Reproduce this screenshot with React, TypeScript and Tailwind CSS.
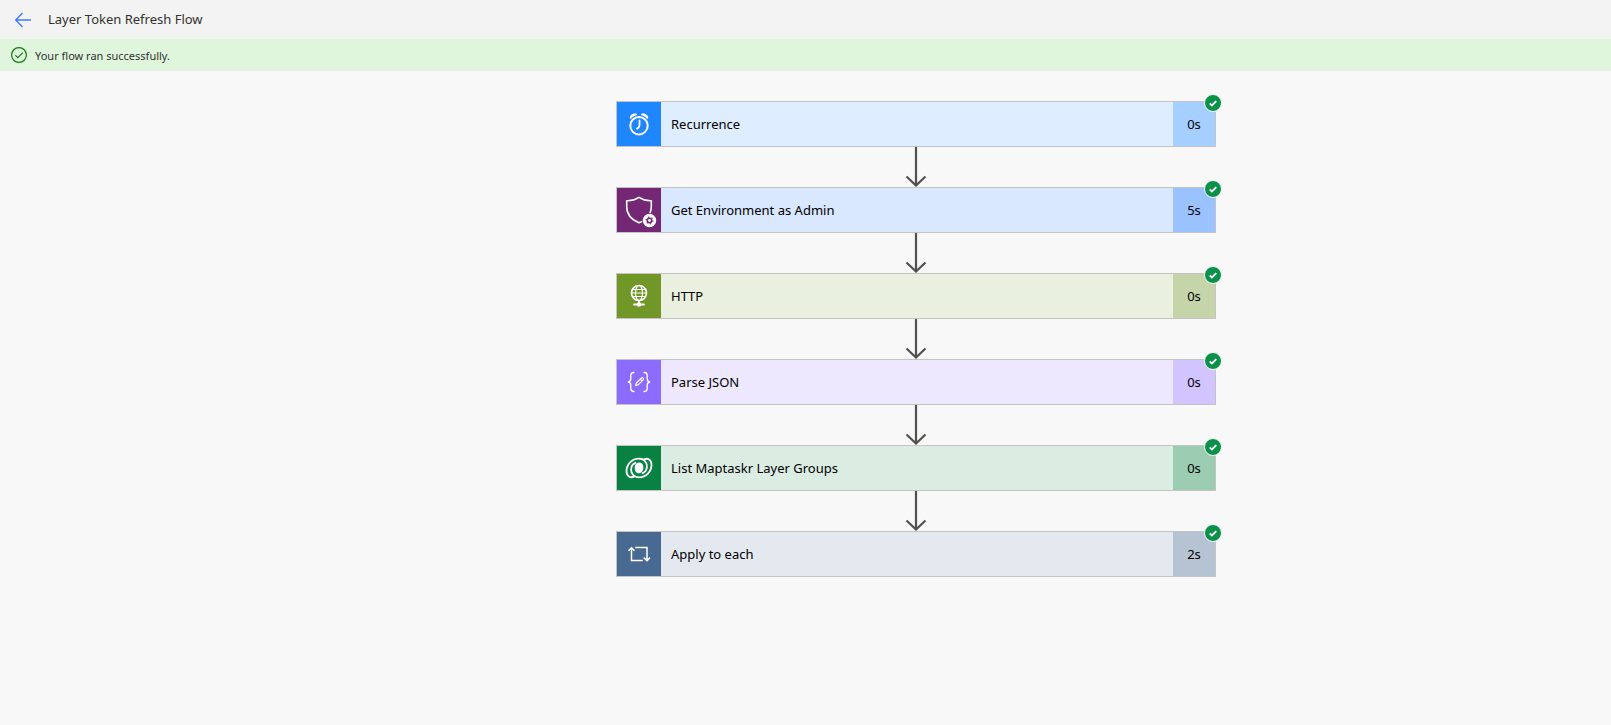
import React from "react";

type Step = {
  name: string;
  duration: string;
  body: string;
  tile: string;
  time: string;
  icon: React.ReactNode;
};

const svgProps = {
  width: 44,
  height: 44,
  viewBox: "0 0 44 44",
  fill: "none",
  stroke: "#fff",
  strokeLinecap: "round" as const,
  strokeLinejoin: "round" as const,
  "aria-hidden": true,
};

const ClockIcon = () => (
  <svg {...svgProps}>
    <circle cx="22" cy="23.700" r="8.7" strokeWidth="2" />
    <path d="M22.5 18.500v4.700c0 1.500-.8 2.600-2.500 3.400" strokeWidth="1.800" />
    <path d="M12.900 16.200c-.8-2.800 3-5.600 6.600-4.500.8.400.7 1.200-.1 1.500-2.200.6-3.700 1.500-5.100 3.200-.5.500-1.200.400-1.400-.2z" fill="#fff" stroke="none" />
    <path d="M31.100 16.200c.8-2.800-3-5.600-6.600-4.500-.8.400-.7 1.200.1 1.500 2.200.6 3.700 1.500 5.100 3.200.5.500 1.200.4 1.400-.2z" fill="#fff" stroke="none" />
  </svg>
);

const ShieldIcon = () => (
  <svg {...svgProps}>
    <path
      d="M27 32.300c-1.500 1-3.200 1.800-5 2.400C14 31.500 9.700 25.500 9.700 18.500v-5.800c4.600.2 8.500-.9 12.300-3.400 3.800 2.500 7.700 3.600 12.300 3.400v5.800c0 2.200-.4 4.300-1.200 6.200"
      strokeWidth="1.600"
    />
    <circle cx="32.500" cy="32.500" r="7.500" fill="#742774" stroke="none" />
    <circle cx="32.500" cy="32.500" r="6.700" fill="#fff" stroke="none" />
    <circle cx="32.500" cy="32.500" r="2.200" stroke="#742774" strokeWidth="1.600" />
    <circle cx="32.500" cy="32.500" r="3.400" stroke="#742774" strokeWidth="1.200" strokeDasharray="1.200 2.360" strokeLinecap="butt" />
  </svg>
);

const GlobeIcon = () => (
  <svg {...svgProps}>
    <circle cx="22" cy="19" r="7.500" strokeWidth="1.700" />
    <ellipse cx="22" cy="19" rx="3.500" ry="7.500" strokeWidth="1.100" />
    <path d="M14.500 19h15M15.800 15.500h12.400M15.800 22.500h12.400" strokeWidth="1" />
    <path d="M22 27v3" strokeWidth="2" />
    <path d="M17 30.500h10" strokeWidth="1.800" />
    <circle cx="22" cy="30.500" r="2.200" fill="#fff" stroke="none" />
  </svg>
);

const JsonIcon = () => (
  <svg {...svgProps}>
    <path
      d="M17 12.500c-2.500 0-3.200.8-3.200 2.700v3.600c0 1.900-.7 2.900-2.500 3.200 1.800.3 2.500 1.300 2.500 3.200v3.600c0 1.900.7 2.700 3.200 2.700M27 12.500c2.500 0 3.200.8 3.200 2.700v3.600c0 1.900.7 2.900 2.500 3.200-1.800.3-2.500 1.300-2.500 3.200v3.600c0 1.900-.7 2.700-3.200 2.700"
      strokeWidth="1.300"
    />
    <path d="M18.600 25.600l.8-2.600 4.900-4.900c.5-.5 1.300-.5 1.800 0s.5 1.300 0 1.800l-4.900 4.900zM23.200 19.200l1.800 1.800" strokeWidth="1.100" />
  </svg>
);

const DataverseIcon = () => (
  <svg {...svgProps}>
    <path
      d="M17.300 30.400c-3.800 2.200-7.800-.4-7.800-5.100C9.500 18.200 15 12.600 22 12.600c4.600 0 7.900 3.300 7.900 7.600 0 3.300-1.600 5.900-4.300 7"
      strokeWidth="1.800"
    />
    <path
      d="M26.700 13.600c3.800-2.200 7.800.4 7.800 5.100 0 7.100-5.500 12.700-12.500 12.700-4.600 0-7.900-3.300-7.900-7.600 0-3.300 1.600-5.900 4.300-7"
      strokeWidth="1.800"
    />
    <path d="M17.700 21.700c0-3 2-5.200 5-5.100 2.300.1 3.700 2.100 3.700 4.700 0 3.400-1.900 6-4.600 6s-4.100-2.600-4.100-5.600z" fill="#fff" stroke="none" />
  </svg>
);

const LoopIcon = () => (
  <svg {...svgProps} strokeLinecap="butt" strokeLinejoin="miter">
    <path d="M25.700 28.400H14.500V16M11.500 18.700l3-3 3 3" strokeWidth="1.500" />
    <path d="M18.300 15.600H30V28.300M26.700 25.600l3.300 3 3-3" strokeWidth="1.500" />
  </svg>
);

const steps: Step[] = [
  { name: "Recurrence", duration: "0s", body: "bg-[#deedff]", tile: "bg-[#1e86ff]", time: "bg-[#a5cfff]", icon: <ClockIcon /> },
  { name: "Get Environment as Admin", duration: "5s", body: "bg-[#d9e7ff]", tile: "bg-[#742774]", time: "bg-[#99c2ff]", icon: <ShieldIcon /> },
  { name: "HTTP", duration: "0s", body: "bg-[#e9f0df]", tile: "bg-[#709727]", time: "bg-[#c6d5a9]", icon: <GlobeIcon /> },
  { name: "Parse JSON", duration: "0s", body: "bg-[#eee8ff]", tile: "bg-[#8c6cff]", time: "bg-[#d1c4ff]", icon: <JsonIcon /> },
  { name: "List Maptaskr Layer Groups", duration: "0s", body: "bg-[#dbece3]", tile: "bg-[#088142]", time: "bg-[#9ccdb3]", icon: <DataverseIcon /> },
  { name: "Apply to each", duration: "2s", body: "bg-[#e4e9f0]", tile: "bg-[#486991]", time: "bg-[#b6c3d3]", icon: <LoopIcon /> },
];

const Connector = () => (
  <svg width="24" height="40" viewBox="0 0 24 40" fill="none" stroke="#50504e" strokeWidth="2.200" aria-hidden="true">
    <path d="M12 0v38.500M2.500 29.500l9.500 9 9.500-9" />
  </svg>
);

const SuccessBadge = () => (
  <svg
    className="absolute -top-2 -right-[7px]"
    width="18"
    height="18"
    viewBox="0 0 18 18"
    role="img"
    aria-label="Succeeded"
  >
    <circle cx="9" cy="9" r="8.500" fill="#0a9149" stroke="#f8f8f8" />
    <path d="M5.700 9.300l2.200 2.200 4.400-4.400" fill="none" stroke="#fff" strokeWidth="1.800" />
  </svg>
);

export default function App() {
  return (
    <div className="min-h-screen bg-[#f8f8f8] font-['Noto_Sans','Open_Sans',sans-serif]">
      <header className="flex h-[39px] items-center gap-[17px] bg-[#f3f3f3] px-[15px]">
        <a href="#" aria-label="Back">
          <svg width="16" height="16" viewBox="0 0 16 16" fill="none" stroke="#3b7bff" strokeWidth="1.400" aria-hidden="true">
            <path d="M16 8H.8M7.500 1L.7 8l6.800 7" />
          </svg>
        </a>
        <h1 className="text-[13px] text-[#323130]">Layer Token Refresh Flow</h1>
      </header>
      <div role="status" className="flex h-8 items-center gap-2 bg-[#dff6dd] px-[11px] text-[11px] text-[#323130]">
        <svg width="16" height="16" viewBox="0 0 16 16" fill="none" stroke="#107c10" strokeWidth="1.200" aria-hidden="true">
          <circle cx="8" cy="8" r="7.400" />
          <path d="M4.300 8.200l2.500 2.500 5-5" />
        </svg>
        <p className="pt-0.5">Your flow ran successfully.</p>
      </div>
      <main className="pt-[30px] pl-[221px]">
        <ol className="mx-auto flex max-w-[600px] flex-col">
          {steps.map((step, i) => (
            <li key={step.name} className="flex flex-col items-center">
              {i > 0 && <Connector />}
              <button type="button" className={`relative flex h-[46px] w-full items-stretch border border-[#c4c4c4] text-left text-[13px] text-black ${step.body}`}>
                <span className={`w-11 ${step.tile}`}>{step.icon}</span>
                <span className="flex flex-1 items-center px-2.5 pt-0.5">{step.name}</span>
                <span className={`flex w-[42px] items-center justify-center pt-0.5 ${step.time}`}>{step.duration}</span>
                <SuccessBadge />
              </button>
            </li>
          ))}
        </ol>
      </main>
    </div>
  );
}
